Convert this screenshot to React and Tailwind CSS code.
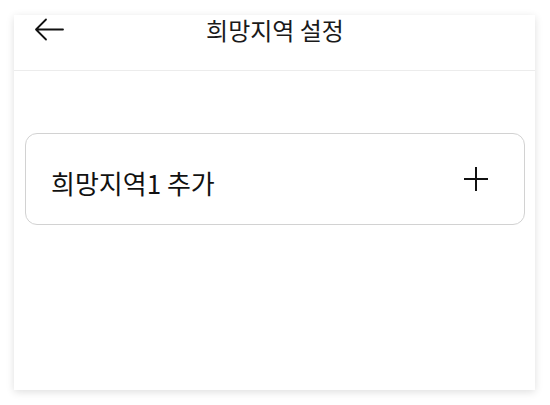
export default function App() {
  return (
    <div className="w-[550px] h-[405px] bg-white pt-[15px] pl-[14px] pr-[15px]" style={{ fontFamily: '"Noto Sans CJK KR", "Noto Sans", sans-serif' }}>
      <div className="h-[375px] bg-white shadow-[0_2px_8px_rgba(0,0,0,0.13)] flex flex-col">
        <div className="h-[56px] border-b border-[#ececec] relative flex justify-center">
          <svg className="absolute left-[20px] top-[3px]" width="30" height="23" viewBox="0 0 30 23" fill="none" stroke="#111" strokeWidth="1.8" strokeLinecap="round" strokeLinejoin="round">
            <path d="M29 11.5H2M12 1.5L2 11.5L12 21.5" />
          </svg>
          <div className="text-[24px] leading-[30px] text-[#1a1a1a] ml-[1px]">희망지역 설정</div>
        </div>
        <div className="pt-[62px] pl-[11px] pr-[10px]">
          <div className="h-[92px] border border-[#d2d2d2] rounded-[12px] flex items-center justify-between pl-[25px] pr-[36px]">
            <span className="text-[26px] text-[#111] mt-[6px]">희망지역1 추가</span>
            <svg width="24" height="24" viewBox="0 0 24 24" fill="none" stroke="#111" strokeWidth="2">
              <path d="M12 0V24M0 12H24" />
            </svg>
          </div>
        </div>
      </div>
    </div>
  );
}
